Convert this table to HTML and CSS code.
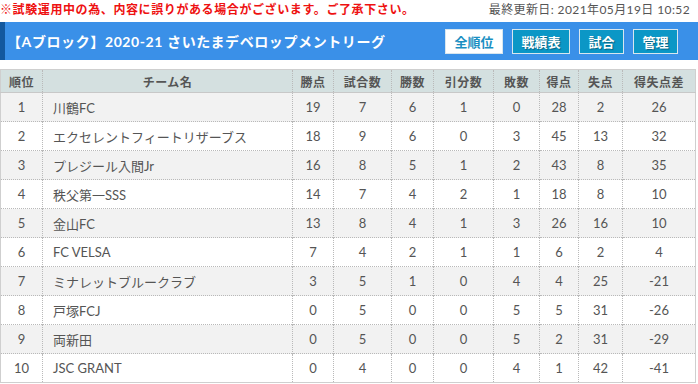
FILE: index.html
```html
<!DOCTYPE html>
<html lang="ja">
<head>
<meta charset="utf-8">
<link rel="stylesheet" href="styles.css">
</head>
<body>
<div class="notice-row">
  <span class="notice">※試験運用中の為、内容に誤りがある場合がございます。ご了承下さい。</span>
  <span class="updated">最終更新日: 2021年05月19日 10:52</span>
</div>
<div class="titlebar">
  <h1 class="title">【Aブロック】2020-21 さいたまデベロップメントリーグ</h1>
  <nav class="btns">
    <a class="btn btn-active w58">全順位</a>
    <a class="btn w58">戦績表</a>
    <a class="btn w45">試合</a>
    <a class="btn w45">管理</a>
  </nav>
</div>
<table class="standings">
  <colgroup>
    <col class="c1"><col class="c2"><col class="c3"><col class="c4"><col class="c5"><col class="c6"><col class="c7"><col class="c8"><col class="c9"><col class="c10">
  </colgroup>
  <thead>
    <tr><th>順位</th><th>チーム名</th><th>勝点</th><th>試合数</th><th>勝数</th><th>引分数</th><th>敗数</th><th>得点</th><th>失点</th><th>得失点差</th></tr>
  </thead>
  <tbody>
    <tr><td>1</td><td class="team">川鶴FC</td><td>19</td><td>7</td><td>6</td><td>1</td><td>0</td><td>28</td><td>2</td><td>26</td></tr>
    <tr><td>2</td><td class="team">エクセレントフィートリザーブス</td><td>18</td><td>9</td><td>6</td><td>0</td><td>3</td><td>45</td><td>13</td><td>32</td></tr>
    <tr><td>3</td><td class="team">プレジール入間Jr</td><td>16</td><td>8</td><td>5</td><td>1</td><td>2</td><td>43</td><td>8</td><td>35</td></tr>
    <tr><td>4</td><td class="team">秩父第一SSS</td><td>14</td><td>7</td><td>4</td><td>2</td><td>1</td><td>18</td><td>8</td><td>10</td></tr>
    <tr><td>5</td><td class="team">金山FC</td><td>13</td><td>8</td><td>4</td><td>1</td><td>3</td><td>26</td><td>16</td><td>10</td></tr>
    <tr><td>6</td><td class="team">FC VELSA</td><td>7</td><td>4</td><td>2</td><td>1</td><td>1</td><td>6</td><td>2</td><td>4</td></tr>
    <tr><td>7</td><td class="team">ミナレットブルークラブ</td><td>3</td><td>5</td><td>1</td><td>0</td><td>4</td><td>4</td><td>25</td><td>-21</td></tr>
    <tr><td>8</td><td class="team">戸塚FCJ</td><td>0</td><td>5</td><td>0</td><td>0</td><td>5</td><td>5</td><td>31</td><td>-26</td></tr>
    <tr><td>9</td><td class="team">両新田</td><td>0</td><td>5</td><td>0</td><td>0</td><td>5</td><td>2</td><td>31</td><td>-29</td></tr>
    <tr><td>10</td><td class="team">JSC GRANT</td><td>0</td><td>4</td><td>0</td><td>0</td><td>4</td><td>1</td><td>42</td><td>-41</td></tr>
  </tbody>
</table>
</body>
</html>
```
FILE: styles.css
```css
* { box-sizing: border-box; }
html, body { margin: 0; padding: 0; background: #fff; }
body {
  font-family: Lato, "Noto Sans CJK JP", sans-serif;
  font-size: 12px;
  color: #555;
}
.notice-row {
  height: 22px;
  display: flex;
  justify-content: space-between;
  align-items: flex-start;
  padding: 2px 8px 0 0;
  line-height: 16px;
}
.notice {
  color: #ee1111;
  font-weight: bold;
  font-size: 12px;
  letter-spacing: 0.6px;
}
.updated {
  color: #555;
  font-size: 12px;
  letter-spacing: 0.4px;
}
.titlebar {
  height: 38px;
  background: #3a90e8;
  border-left: 5px solid #13589e;
  display: flex;
  align-items: center;
  justify-content: space-between;
  padding: 0 20px 0 2px;
}
.title {
  margin: 0;
  color: #fff;
  font-size: 14px;
  font-weight: bold;
  letter-spacing: 0.6px;
}
.btns {
  display: flex;
  gap: 9px;
}
.btn {
  height: 25px;
  display: flex;
  align-items: center;
  justify-content: center;
  background: #0b97c6;
  color: #fff;
  border: 1px solid #d8e6ee;
  font-weight: bold;
  font-size: 13px;
  text-shadow: 1px 1px 1px rgba(0,0,0,0.35);
}
.btn-active {
  background: #fff;
  color: #1a8fc2;
  text-shadow: none;
}
.w58 { width: 58px; }
.w45 { width: 45px; }
.standings {
  margin-top: 9px;
  width: 696px;
  border-collapse: collapse;
  table-layout: fixed;
  border: 1px solid #cfcfcf;
}
.c1 { width: 42px; }
.c2 { width: 250px; }
.c3 { width: 41px; }
.c4 { width: 58px; }
.c5 { width: 42px; }
.c6 { width: 60px; }
.c7 { width: 46px; }
.c8 { width: 39px; }
.c9 { width: 44px; }
.c10 { width: 73px; }
.standings th {
  background: #d4e0e0;
  height: 23px;
  font-weight: bold;
  font-size: 12px;
  color: #555;
  text-align: center;
  padding: 0;
  letter-spacing: 0.5px;
  border-left: 1px dotted #b9b9b9;
  border-bottom: 1px solid #c8c8c8;
}
.standings td {
  height: 29px;
  text-align: center;
  padding: 0;
  border-left: 1px dotted #b9b9b9;
  border-top: 1px dotted #b9b9b9;
  font-size: 13px;
}
.standings th:first-child, .standings td:first-child { border-left: none; }
.standings tbody tr:first-child td { border-top: none; }
.standings tbody tr:nth-child(odd) td { background: #f2f2f2; }
.standings td.team {
  text-align: left;
  padding-left: 10px;
}
```
